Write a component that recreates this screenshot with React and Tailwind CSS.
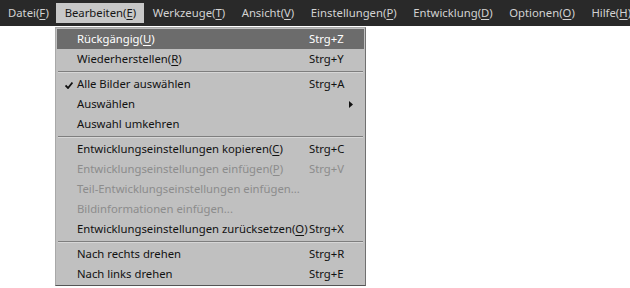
import React from 'react';

const bar = [
  ['Datei', 'F'],
  ['Bearbeiten', 'E'],
  ['Werkzeuge', 'T'],
  ['Ansicht', 'V'],
  ['Einstellungen', 'P'],
  ['Entwicklung', 'D'],
  ['Optionen', 'O'],
  ['Hilfe', 'H'],
];

const items = [
  { label: 'Rückgängig', key: 'U', sc: 'Strg+Z', hover: true },
  { label: 'Wiederherstellen', key: 'R', sc: 'Strg+Y' },
  { sep: true },
  { label: 'Alle Bilder auswählen', sc: 'Strg+A', checked: true },
  { label: 'Auswählen', sub: true },
  { label: 'Auswahl umkehren' },
  { sep: true },
  { label: 'Entwicklungseinstellungen kopieren', key: 'C', sc: 'Strg+C' },
  { label: 'Entwicklungseinstellungen einfügen', key: 'P', sc: 'Strg+V', disabled: true },
  { label: 'Teil-Entwicklungseinstellungen einfügen...', disabled: true },
  { label: 'Bildinformationen einfügen...', disabled: true },
  { label: 'Entwicklungseinstellungen zurücksetzen', key: 'O', sc: 'Strg+X' },
  { sep: true },
  { label: 'Nach rechts drehen', sc: 'Strg+R' },
  { label: 'Nach links drehen', sc: 'Strg+E' },
];

function Label({ label, k }) {
  return (
    <span>
      {label}
      {k && (
        <>
          (<span className="underline underline-offset-[2px]">{k}</span>)
        </>
      )}
    </span>
  );
}

export default function App() {
  return (
    <div className="w-[630px] h-[288px] bg-white overflow-hidden text-[11.3px] font-['Noto_Sans',sans-serif] whitespace-nowrap">
      {/* menu bar */}
      <div className="h-[26px] bg-[#292929] flex items-center text-[#d2d2d2] overflow-hidden">
        {bar.map(([t, k], i) => (
          <div
            key={t}
            className={`h-[20px] shrink-0 flex items-center ${i === 0 ? 'pl-[8px] pr-[7.5px]' : 'px-[8.3px]'} ${i === 1 ? 'bg-[#c8c8c8] text-[#161616]' : ''}`}
          >
            <Label label={t} k={k} />
          </div>
        ))}
      </div>

      {/* dropdown */}
      <div className="ml-[55px] mt-px w-[311px] bg-[#c0c0c0] border border-[#a8a8a8] border-r-[#707070] border-b-[#555] pt-px pb-px">
        {items.map((it, i) =>
          it.sep ? (
            <div key={i} className="mx-[2px] pt-[2px] pb-px">
              <div className="border-t border-[#7e7e7e] border-b border-b-[#d6d6d6]" />
            </div>
          ) : (
            <div
              key={i}
              className={`h-[20px] mx-px flex items-center pl-[8px] ${it.hover ? 'bg-[#6c6c6c] text-white' : it.disabled ? 'text-[#8c8c8c]' : 'text-[#121212]'}`}
            >
              <span className="w-[12px] shrink-0 flex items-center">
                {it.checked && (
                  <svg width="8" height="7" viewBox="0 0 8 7" className="mt-[3px]">
                    <path d="M0.5 3.5 L3 6 L7.5 0.5" fill="none" stroke="#111" strokeWidth="1.8" />
                  </svg>
                )}
              </span>
              <span className="flex-1 min-w-0">
                <Label label={it.label} k={it.key} />
              </span>
              <span className="w-[55px] shrink-0 flex items-center">
                {it.sc}
                {it.sub && (
                  <svg width="4" height="7" viewBox="0 0 4 7" className="ml-[40px]">
                    <path d="M0 0 L4 3.5 L0 7 Z" fill="#111" />
                  </svg>
                )}
              </span>
            </div>
          )
        )}
      </div>
    </div>
  );
}
